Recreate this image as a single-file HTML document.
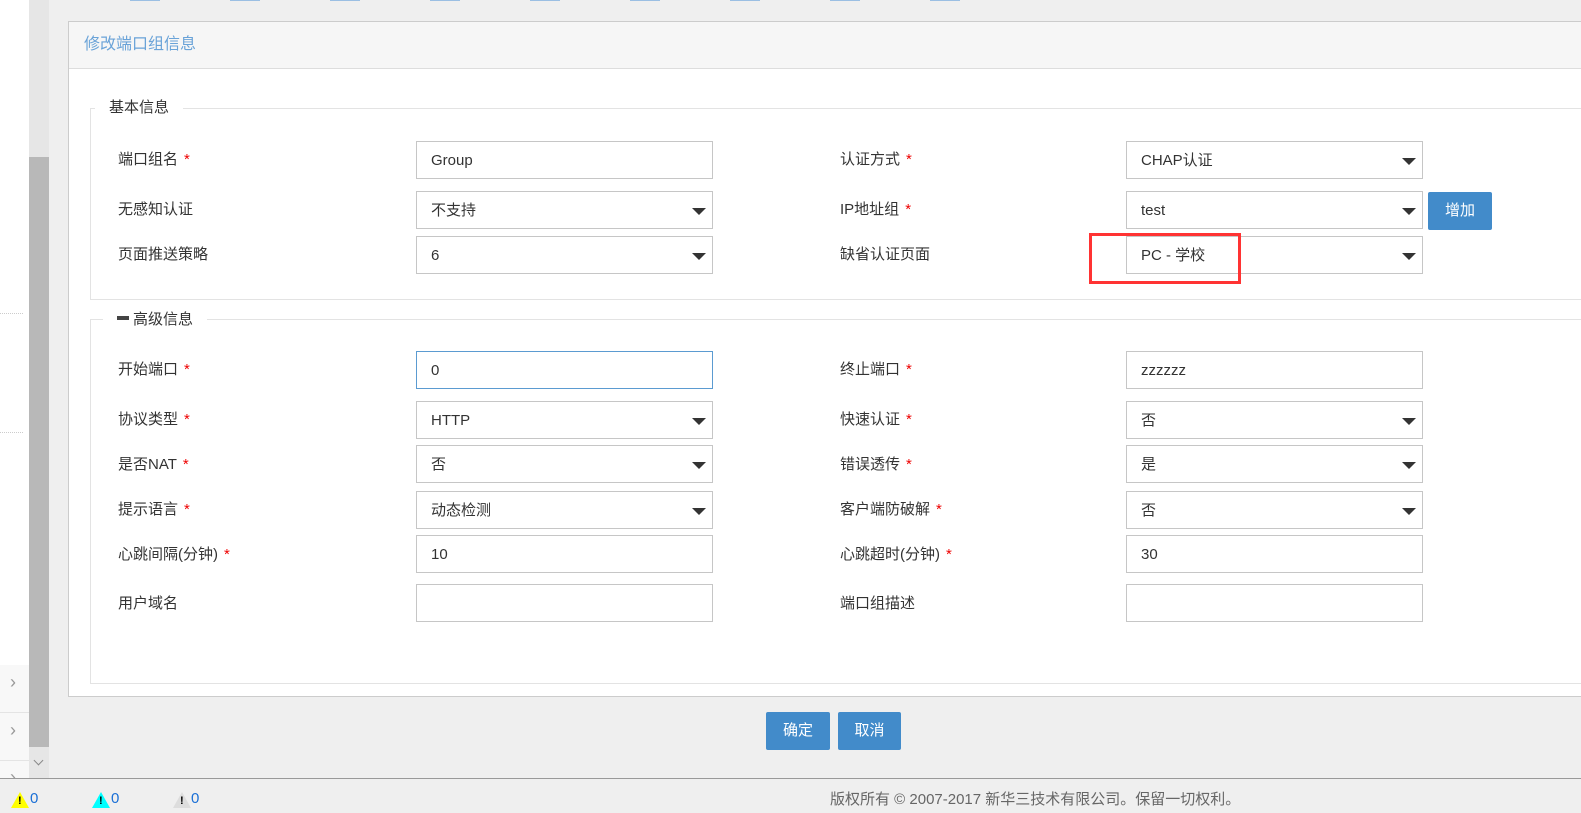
<!DOCTYPE html>
<html><head><meta charset="utf-8">
<style>
*{margin:0;padding:0;box-sizing:border-box}
body{width:1581px;height:813px;overflow:hidden;background:#efefef;font-family:"Liberation Sans","Noto Sans CJK SC",sans-serif;font-size:15px;color:#333;position:relative}
.a{position:absolute}
.lbl{position:absolute;font-size:15px;color:#333;line-height:20px}
.lbl i{font-style:normal;color:#e00;margin-left:6px}
.inp{position:absolute;width:297px;height:38px;border:1px solid #c6c6c6;background:#fff;padding-left:14px;line-height:38px;font-size:15px;color:#333}
.sel:after{content:"";position:absolute;right:6px;top:16px;border-left:7px solid transparent;border-right:7px solid transparent;border-top:7px solid #333}
.btn{position:absolute;background:#428bca;color:#fff;font-size:15px;text-align:center;border-radius:2px}
.fs{position:absolute;left:90px;right:-10px;border:1px solid #e3e3e3}
.leg{position:absolute;background:#fff;padding:0 14px;font-size:15px;color:#333;line-height:20px}
</style></head><body>
<!-- sidebar -->
<div class="a" style="left:0;top:0;width:29px;height:778px;background:#fff"></div>
<div class="a" style="left:0;top:665px;width:29px;height:113px;background:#f8f8f8"></div>
<div class="a" style="left:0;top:313px;width:23px;border-top:1px dotted #ccc"></div>
<div class="a" style="left:0;top:432px;width:23px;border-top:1px dotted #ccc"></div>
<div class="a" style="left:0;top:712px;width:29px;border-top:1px solid #e4e4e4"></div>
<div class="a" style="left:0;top:760px;width:29px;border-top:1px solid #e4e4e4"></div>
<div class="a" style="left:10px;top:672px;color:#999;font-size:18px">›</div>
<div class="a" style="left:10px;top:720px;color:#999;font-size:18px">›</div>
<div class="a" style="left:10px;top:767px;color:#999;font-size:18px">›</div>
<div class="a" style="left:29px;top:0;width:20px;height:778px;background:#e6e6e6"></div>
<div class="a" style="left:29px;top:157px;width:20px;height:590px;background:#b8b8b8"></div>
<div class="a" style="left:35px;top:757px;width:7px;height:7px;border-right:1px solid #888;border-bottom:1px solid #888;transform:rotate(45deg)"></div>
<!-- top cut links -->
<div class="a" style="left:100px;top:0;width:900px;height:1px;background:repeating-linear-gradient(90deg,transparent 0 30px,#9bbfe3 30px 60px,transparent 60px 100px)"></div>
<!-- panel -->
<div class="a" style="left:68px;top:21px;width:1530px;height:676px;border:1px solid #ccc;background:#fff"></div>
<div class="a" style="left:69px;top:22px;width:1520px;height:47px;background:#f6f6f6;border-bottom:1px solid #ddd"></div>
<div class="a" style="left:84px;top:34px;font-size:16px;color:#6aa3d8;line-height:22px">修改端口组信息</div>

<div class="fs" style="top:108px;height:192px"></div>
<div class="leg" style="left:95px;top:98px">基本信息</div>
<div class="fs" style="top:319px;height:365px"></div>
<div class="leg" style="left:103px;top:310px"><span style="display:inline-block;width:12px;height:4px;background:#444;vertical-align:middle;margin-right:4px;position:relative;top:-2px"></span>高级信息</div>

<div class="lbl" style="left:118px;top:150px">端口组名<i>*</i></div>
<div class="inp" style="left:416px;top:141px">Group</div>
<div class="lbl" style="left:840px;top:150px">认证方式<i>*</i></div>
<div class="inp sel" style="left:1126px;top:141px">CHAP认证</div>

<div class="lbl" style="left:118px;top:200px">无感知认证</div>
<div class="inp sel" style="left:416px;top:191px">不支持</div>
<div class="lbl" style="left:840px;top:200px">IP地址组<i>*</i></div>
<div class="inp sel" style="left:1126px;top:191px">test</div>
<div class="btn" style="left:1428px;top:192px;width:64px;height:38px;line-height:38px">增加</div>

<div class="lbl" style="left:118px;top:245px">页面推送策略</div>
<div class="inp sel" style="left:416px;top:236px">6</div>
<div class="lbl" style="left:840px;top:245px">缺省认证页面</div>
<div class="inp sel" style="left:1126px;top:236px">PC - 学校</div>
<div class="a" style="left:1089px;top:233px;width:152px;height:51px;border:3px solid #f33"></div>

<div class="lbl" style="left:118px;top:360px">开始端口<i>*</i></div>
<div class="inp" style="left:416px;top:351px;border-color:#5b9bd1">0</div>
<div class="lbl" style="left:840px;top:360px">终止端口<i>*</i></div>
<div class="inp" style="left:1126px;top:351px">zzzzzz</div>

<div class="lbl" style="left:118px;top:410px">协议类型<i>*</i></div>
<div class="inp sel" style="left:416px;top:401px">HTTP</div>
<div class="lbl" style="left:840px;top:410px">快速认证<i>*</i></div>
<div class="inp sel" style="left:1126px;top:401px">否</div>

<div class="lbl" style="left:118px;top:455px">是否NAT<i>*</i></div>
<div class="inp sel" style="left:416px;top:445px">否</div>
<div class="lbl" style="left:840px;top:455px">错误透传<i>*</i></div>
<div class="inp sel" style="left:1126px;top:445px">是</div>

<div class="lbl" style="left:118px;top:500px">提示语言<i>*</i></div>
<div class="inp sel" style="left:416px;top:491px">动态检测</div>
<div class="lbl" style="left:840px;top:500px">客户端防破解<i>*</i></div>
<div class="inp sel" style="left:1126px;top:491px">否</div>

<div class="lbl" style="left:118px;top:545px">心跳间隔(分钟)<i>*</i></div>
<div class="inp" style="left:416px;top:535px">10</div>
<div class="lbl" style="left:840px;top:545px">心跳超时(分钟)<i>*</i></div>
<div class="inp" style="left:1126px;top:535px">30</div>

<div class="lbl" style="left:118px;top:594px">用户域名</div>
<div class="inp" style="left:416px;top:584px"></div>
<div class="lbl" style="left:840px;top:594px">端口组描述</div>
<div class="inp" style="left:1126px;top:584px"></div>

<div class="btn" style="left:766px;top:712px;width:64px;height:38px;line-height:38px">确定</div>
<div class="btn" style="left:838px;top:712px;width:63px;height:38px;line-height:38px">取消</div>

<!-- footer -->
<div class="a" style="left:0;top:778px;width:1581px;height:35px;background:#efefef;border-top:1px solid #999"></div>
<div class="a" style="left:830px;top:790px;font-size:15px;color:#666;line-height:20px">版权所有 © 2007-2017 新华三技术有限公司。保留一切权利。</div>
<div class="a" style="left:11px;top:792px;width:0;height:0;border-left:9px solid transparent;border-right:9px solid transparent;border-bottom:16px solid #ff0"></div>
<div class="a" style="left:18px;top:795px;font-size:11px;font-weight:bold;color:#000">!</div>
<div class="a" style="left:30px;top:790px;color:#1a6fd6;font-size:15px">0</div>
<div class="a" style="left:92px;top:792px;width:0;height:0;border-left:9px solid transparent;border-right:9px solid transparent;border-bottom:16px solid #0ff"></div>
<div class="a" style="left:99px;top:795px;font-size:11px;font-weight:bold;color:#000">!</div>
<div class="a" style="left:111px;top:790px;color:#1a6fd6;font-size:15px">0</div>
<div class="a" style="left:173px;top:792px;width:0;height:0;border-left:9px solid transparent;border-right:9px solid transparent;border-bottom:16px solid #ddd"></div>
<div class="a" style="left:180px;top:795px;font-size:11px;font-weight:bold;color:#000">!</div>
<div class="a" style="left:191px;top:790px;color:#1a6fd6;font-size:15px">0</div>
</body></html>
